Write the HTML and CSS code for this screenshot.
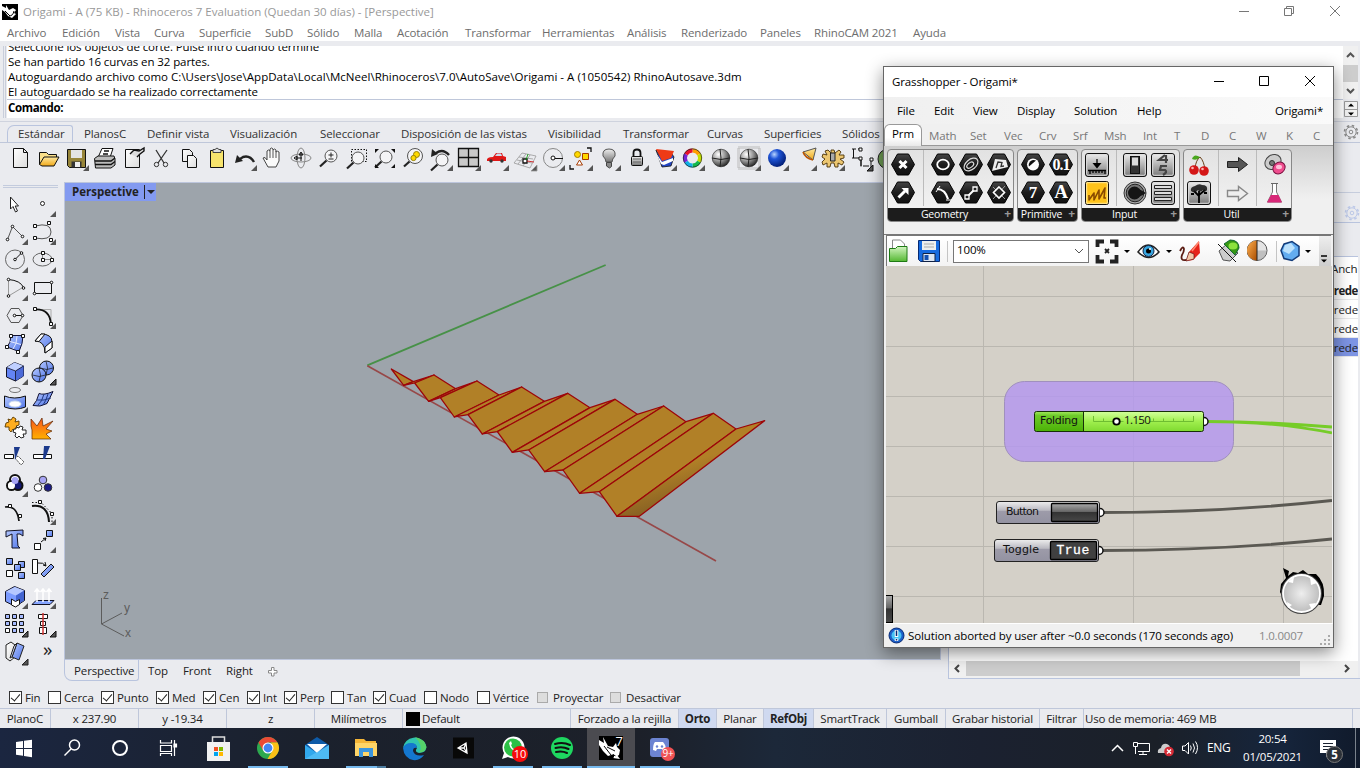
FILE: index.html
```html
<!DOCTYPE html>
<html lang="es">
<head>
<meta charset="utf-8">
<title>Origami - A (75 KB) - Rhinoceros 7 Evaluation</title>
<link rel="stylesheet" href="styles.css">
</head>
<body>
<svg class="defs" width="0" height="0">
<defs>
<linearGradient id="gBlue" x1="0" y1="0" x2="1" y2="1"><stop offset="0" stop-color="#b4c8ff"/><stop offset="1" stop-color="#4f74e8"/></linearGradient>
<linearGradient id="gPaper" x1="0" y1="0" x2="1" y2="1"><stop offset="0" stop-color="#fff"/><stop offset="1" stop-color="#dcdcdc"/></linearGradient>
<linearGradient id="gGold" x1="0" y1="0" x2="0" y2="1"><stop offset="0" stop-color="#ffe9a0"/><stop offset="1" stop-color="#f0a818"/></linearGradient>
<linearGradient id="gFire" x1="0" y1="0" x2="0" y2="1"><stop offset="0" stop-color="#f7541c"/><stop offset="1" stop-color="#ffb000"/></linearGradient>
<radialGradient id="gGrey" cx=".35" cy=".3" r=".75"><stop offset="0" stop-color="#fff"/><stop offset=".5" stop-color="#999"/><stop offset="1" stop-color="#222"/></radialGradient>
<radialGradient id="gSea" cx=".35" cy=".3" r=".75"><stop offset="0" stop-color="#b8d4ff"/><stop offset=".35" stop-color="#1f55d8"/><stop offset="1" stop-color="#001a70"/></radialGradient>
<linearGradient id="gBtn" x1="0" y1="0" x2="0" y2="1"><stop offset="0" stop-color="#eee"/><stop offset="1" stop-color="#777"/></linearGradient>
<linearGradient id="gHex" x1="0" y1="0" x2="0" y2="1"><stop offset="0" stop-color="#444"/><stop offset=".5" stop-color="#1c1c1c"/><stop offset="1" stop-color="#111"/></linearGradient>
<linearGradient id="gGreen" x1="0" y1="0" x2="0" y2="1"><stop offset="0" stop-color="#d2f5c0"/><stop offset="1" stop-color="#54b832"/></linearGradient>
<linearGradient id="gOrange" x1="0" y1="0" x2="1" y2="1"><stop offset="0" stop-color="#ffb050"/><stop offset="1" stop-color="#a84c00"/></linearGradient>
<linearGradient id="gShade" x1=".45" y1=".45" x2=".6" y2=".75"><stop offset="0" stop-color="#b18027"/><stop offset="1" stop-color="#8a6323"/></linearGradient>
<symbol id="tri" viewBox="0 0 28 28"><path d="M27 21v6h-6z" fill="#555"/></symbol>
<symbol id="hex" viewBox="0 0 28 28"><path d="M8 4h11l6 10.500-6 10.500H8L2 14.500z" fill="url(#gHex)" stroke="#000" transform="translate(.5 0)"/></symbol>
<symbol id="key" viewBox="0 0 28 28"><rect x="2.500" y="3.500" width="23" height="23" rx="2.500" fill="url(#gBtn)" stroke="#111"/><rect x="3.700" y="4.700" width="20.600" height="20.600" rx="1.500" fill="none" stroke="#ddd"/></symbol>
<symbol id="mag" viewBox="0 0 28 28"><circle cx="17" cy="12" r="6" fill="#f4f4f6" stroke="#555"/><path d="M12.500 16.500 6 22.500" stroke="#222" stroke-width="2.200"/></symbol>
<symbol id="cog" viewBox="0 0 16 16"><circle cx="8" cy="8" r="5.200" fill="none" stroke="currentColor"/><circle cx="8" cy="8" r="6.500" fill="none" stroke="currentColor" stroke-width="1.600" stroke-dasharray="2.500 2.600"/><circle cx="8" cy="8" r="1.800" fill="none" stroke="currentColor"/></symbol>
</defs>
</svg>

<div class="rhino">
  <header class="titlebar">
    <svg class="logo" width="16" height="16" viewBox="0 0 16 16"><rect width="16" height="16" fill="#000"/><path d="M0 2l4 2 0-3 3 5 4-2 3 2-2 3 2 1-4 4-4-2-3-4-3-2z" fill="#fff"/><path d="M7 12q4 0 5-5M3 7l5 5" stroke="#000" fill="none"/></svg>
    <span class="caption">Origami - A (75 KB) - Rhinoceros 7 Evaluation (Quedan 30 días) - [Perspective]</span>
    <svg class="winctl" width="110" height="22" viewBox="0 0 110 22" fill="none" stroke="#777"><path d="M7 10.500h10M98 5l10 10M108 5 98 15"/><path d="M52.500 7.500h7v7h-7zM54.500 7V5.500h7v7H60"/></svg>
  </header>
  <nav class="menu"><span>Archivo</span><span>Edición</span><span>Vista</span><span>Curva</span><span>Superficie</span><span>SubD</span><span>Sólido</span><span>Malla</span><span>Acotación</span><span>Transformar</span><span>Herramientas</span><span>Análisis</span><span>Renderizado</span><span>Paneles</span><span>RhinoCAM 2021</span><span>Ayuda</span></nav>

  <section class="command">
    <i class="grip"></i>
    <div class="cmdbox">
      <div class="history"><p>Seleccione los objetos de corte. Pulse intro cuando termine</p><p>Se han partido 16 curvas en 32 partes.</p><p class="path">Autoguardando archivo como C:\Users\Jose\AppData\Local\McNeel\Rhinoceros\7.0\AutoSave\Origami - A (1050542) RhinoAutosave.3dm</p><p>El autoguardado se ha realizado correctamente</p></div>
      <div class="prompt">Comando:</div>
    </div>
    <svg class="cmdscroll" width="17" height="72" viewBox="0 0 17 72"><path d="M0 0h15v53H0z" fill="#f0f0f0"/><path d="M0 19h15v17H0z" fill="#cdcdcd"/><path d="M4 11l3.500-3.500L11 11M4 43l3.500 3.500L11 43" fill="none" stroke="#555" stroke-width="2"/><path d="M1.500 55.500h13v15h-13zM1.500 63.500h13" fill="#f2f2f2" stroke="#999"/><path d="M8 57.500l3 3H5zM8 69.500l3-3H5z" fill="#000"/></svg>
  </section>

  <nav class="tooltabs"><span class="on">Estándar</span><span>PlanosC</span><span>Definir vista</span><span>Visualización</span><span>Seleccionar</span><span>Disposición de las vistas</span><span>Visibilidad</span><span>Transformar</span><span>Curvas</span><span>Superficies</span><span>Sólidos</span><svg width="16" height="16"><use href="#cog"/></svg></nav>

  <div class="toolbar">
    <svg viewBox="0 0 28 28"><path d="M7.500 4.500h10l4 4v15h-14z" fill="url(#gPaper)" stroke="#111"/><path d="M17.500 4.500v4h4" fill="none" stroke="#111"/></svg>
    <svg viewBox="0 0 28 28"><path d="M5.500 20.500v-12h7l2 2h8v3" fill="#fbe08a" stroke="#111"/><path d="M5.500 20.500 10 13h15l-5 9H8z" fill="url(#gGold)" stroke="#111"/></svg>
    <svg viewBox="0 0 28 28"><path d="M5.500 5.500h18v18h-16l-2-2z" fill="#97853a" stroke="#111"/><path d="M9 6h11v8H9z" fill="#e4e4e4"/><path d="M9.500 17.500h10v6h-10z" fill="#333"/><path d="M13 18h5v5h-5z" fill="#eee"/><use href="#tri"/></svg>
    <svg viewBox="0 0 28 28"><path d="M12 4.500h11l-3 9H8z" fill="#fff" stroke="#111"/><path d="M4.500 14.500 8 12h16l1 3v6l-4 3H5.500z" fill="#bbb" stroke="#111"/><path d="M5 17h16l4-3M5 20.500h16l4-3M14 7h5M13 10h5" stroke="#111" stroke-width="1.300" fill="none"/></svg>
    <svg viewBox="0 0 28 28"><path d="M7.500 5.500h14v18h-14z" fill="url(#gPaper)" stroke="#111"/><path d="M12 10l4-4 5 1 5-3v3l-4 3-3 3" fill="#ddd" stroke="#111" stroke-width="1.400"/></svg>
    <svg viewBox="0 0 28 28" fill="none" stroke="#333"><path d="M10 6l8 13M21 6l-9 13" stroke-width="1.300"/><circle cx="10.500" cy="20.500" r="2.200"/><circle cx="19.500" cy="20.500" r="2.200"/></svg>
    <svg viewBox="0 0 28 28" fill="url(#gPaper)" stroke="#111"><path d="M8.500 5.500h7l3 3v9h-10z"/><path d="M13.500 11.500h6l3 3v9h-9z"/></svg>
    <svg viewBox="0 0 28 28"><path d="M8.500 6.500h13v17h-13z" fill="#f7e46d" stroke="#111"/><path d="M11 8.500h8v-3h-2L15 4l-2 1.500h-2z" fill="#ddd" stroke="#444"/></svg>
    <svg viewBox="0 0 28 28"><path d="M24 18q-4-7-11-5l-3 2" fill="none" stroke="#222" stroke-width="2.400"/><path d="M5 19l2-8 6 6z" fill="#222"/><use href="#tri"/></svg>
    <svg viewBox="0 0 28 28"><path d="M10 23l-5-9q2-2 4 2V7q1.500-2 3 0V5q1.500-2 3 0v1q1.500-2 3 0v2q1.500-1.500 3 0v9l-3 6z" fill="#fafafa" stroke="#444"/><path d="M12 7v7M15 6v8M18 7v7" stroke="#555"/></svg>
    <svg viewBox="0 0 28 28" fill="none" stroke="#888"><ellipse cx="15" cy="14" rx="10" ry="4"/><ellipse cx="15" cy="14" rx="4" ry="10"/><path d="M10 14h6M15 9v8M8 14l3-2v4zM15 8l-2 3h4z" stroke="#111"/></svg>
    <svg viewBox="0 0 28 28"><use href="#mag"/><path d="M14.500 11h5M17 8.500v5M14.500 15h5" stroke="#222"/></svg>
    <svg viewBox="0 0 28 28"><rect x="9.500" y="5.500" width="15" height="12" fill="none" stroke="#111" stroke-dasharray="1.500 1.500"/><g transform="translate(-1 2)"><use href="#mag"/></g></svg>
    <svg viewBox="0 0 28 28"><g transform="translate(-1 1)"><use href="#mag"/></g><path d="M5 9V5h4zM21 5h4v4zM25 20v4h-4zM9 24H5v-4z" fill="#111"/></svg>
    <svg viewBox="0 0 28 28"><circle cx="17" cy="12" r="7.500" fill="#f4f4f6" stroke="#555"/><path d="M11.500 17.500 6 22.500" stroke="#222" stroke-width="2.200"/><circle cx="18.500" cy="10.500" r="3" fill="#ffd900" stroke="#98820a"/><circle cx="15.500" cy="14" r="2.600" fill="#ffd900" stroke="#98820a"/></svg>
    <svg viewBox="0 0 28 28"><g transform="translate(-1 4)"><use href="#mag"/></g><path d="M23 11q-6-7-13-2" fill="none" stroke="#222" stroke-width="2.400"/><path d="M5 13l1-8 6 5z" fill="#222"/><use href="#tri"/></svg>
    <svg viewBox="0 0 28 28"><path d="M4.500 4.500h20v18h-20z" fill="#c9c9c9" stroke="#111" stroke-width="1.300"/><path d="M4 13.500h21M14.500 4v19" stroke="#111" stroke-width="1.300"/><use href="#tri"/></svg>
    <svg viewBox="0 0 28 28"><path d="M5 17q-1-4 6-4l3-4h6l1 3 3 1v4z" fill="#e01818"/><path d="M13 12l2-2.500h4l1 2.500z" fill="#cde"/><circle cx="9" cy="17" r="1.700" fill="#333"/><circle cx="20" cy="17" r="1.700" fill="#333"/><use href="#tri"/></svg>
    <svg viewBox="0 0 28 28" fill="none" stroke="#999" stroke-width=".8"><path d="M4 19 12 9l14 3-6 12zM7 16l15 3M9 13l14 2M8 20l8-10M13 22l7-11"/><path d="M13 15h4v4h-4z" stroke="#111" stroke-width="1.300" fill="#fff"/><path d="M16 16l2-6" stroke="#090"/><path d="M17 17l7 1" stroke="#c00"/><use href="#tri"/></svg>
    <svg viewBox="0 0 28 28"><circle cx="15" cy="14" r="9.500" fill="none" stroke="#888"/><path d="M15 14.500h10" stroke="#111"/><circle cx="15" cy="14" r="2" fill="#fff" stroke="#111"/><use href="#tri"/></svg>
    <svg viewBox="0 0 28 28"><path d="M4 21v4h4M21 4h4v4" fill="none" stroke="#111" stroke-width="1.300"/><circle cx="11.500" cy="10.500" r="3" fill="#ffd900" stroke="#a68000"/><path d="M16.500 9.500h6v6h-6z" fill="#ffd900" stroke="#a63a00"/><path d="M13.500 16l3 5h-6z" fill="#fff" stroke="#a63a00"/><use href="#tri"/></svg>
    <svg viewBox="0 0 28 28"><path d="M12 18q0-3-3-6-1-7 6-7t6 7q-3 3-3 6z" fill="url(#gBtn)" stroke="#555"/><path d="M12.500 18.500h5v4l-2 1.500-3-2z" fill="#888" stroke="#444"/><use href="#tri"/></svg>
    <svg viewBox="0 0 28 28"><path d="M11.500 13V9q0-3.500 3.500-3.500t3.500 3.500v4" fill="none" stroke="#111" stroke-width="1.800"/><rect x="9.500" y="12.500" width="11" height="9" rx="1" fill="url(#gBtn)" stroke="#111"/><path d="M11 15h8M11 18h8" stroke="#666"/><use href="#tri"/></svg>
    <svg viewBox="0 0 28 28"><path d="M6 6l5 7 11-3 2 3-3 9-9 1z" fill="#2346c4" stroke="#111" stroke-width=".8"/><path d="M6 9l6 9 11-4v3l-9 4-3-1z" fill="#fff"/><path d="M6 5l18 2-3 7-9 3z" fill="#ee3a16"/><use href="#tri"/></svg>
    <svg viewBox="0 0 28 28" fill="none" stroke-width="4"><path d="M14.500 6.500a7.500 7.500 0 0 1 6.500 3.700" stroke="#ff9e00"/><path d="M21 10.200a7.500 7.500 0 0 1 0 7.600" stroke="#c5e000"/><path d="M21 17.800a7.500 7.500 0 0 1-6.500 3.700" stroke="#12b94c"/><path d="M14.500 21.500A7.500 7.500 0 0 1 8 17.800" stroke="#10b0e8"/><path d="M8 17.800a7.500 7.500 0 0 1 0-7.600" stroke="#7524d8"/><path d="M8 10.200a7.500 7.500 0 0 1 6.500-3.700" stroke="#e8102c"/><circle cx="14.500" cy="14" r="9.200" stroke="#222" stroke-width=".7"/><use href="#tri"/></svg>
    <svg viewBox="0 0 28 28"><circle cx="15" cy="14" r="8.800" fill="url(#gGrey)" stroke="#222" stroke-width=".6"/><path d="M6 14q9 3 18 0M14 5q2 9 0 18" stroke="#222" fill="none"/></svg>
    <svg viewBox="0 0 28 28"><rect x="4.500" y="3.500" width="21" height="21" fill="none" stroke="#bbb" stroke-width="3" stroke-dasharray="1 1"/><circle cx="15" cy="14" r="8.800" fill="url(#gGrey)" stroke="#222" stroke-width=".6"/><path d="M6 14q9 3 18 0M14 5q2 9 0 18" stroke="#222" fill="none"/><use href="#tri"/></svg>
    <svg viewBox="0 0 28 28"><circle cx="15" cy="14" r="9" fill="url(#gSea)"/><use href="#tri"/></svg>
    <svg viewBox="0 0 28 28"><path d="M13 8l13-4-3 12z" fill="url(#gGold)" stroke="#555"/><path d="M13 8q2 6 10 8" fill="none" stroke="#b50" stroke-width="1.600"/><use href="#tri"/></svg>
    <svg viewBox="0 0 28 28"><path d="M13 9l0-3 3 0 1 3 4-3 2 2-2 3 5 0 0 3-4 1 4 3-2 3-4-2 0 4-3 0-1-4-3 0-1 4-3 0 0-4-4 2-1-3 3-3-3-2 1-3 4 1-2-4 3-1 3 3z" fill="#ecc670" stroke="#4b3208" stroke-width=".9"/><path d="M12.500 9h4.500v8h-4.500z" fill="#aaa" stroke="#222"/><use href="#tri"/></svg>
    <svg viewBox="0 0 28 28" fill="none" stroke="#111"><path d="M6 5h4M6 14h4M7.500 5v9M12 5h4M10 14h5v8M15 14.500v8M25 15v8M17 22h6" /><path d="M13 4h3v3h-3zM13 13h3v3h-3zM24 14h3v3h-3z" fill="#fff"/><use href="#tri"/></svg>
    <svg viewBox="0 0 28 28"><circle cx="14" cy="15" r="10" fill="#6d9b54" stroke="#222"/></svg>
  </div>

  <main class="work">
    <aside class="side">
      <i class="hgrip"></i>
      <div class="tools">
        <svg viewBox="0 0 28 28"><path d="M9.500 7v12l2.500-2.500L14.500 22l2-1-2.300-5H17.500z" fill="#fff" stroke="#222"/></svg>
        <svg viewBox="0 0 28 28"><circle cx="13.500" cy="13.500" r="2" fill="#fff" stroke="#222"/><use href="#tri"/></svg>
        <svg viewBox="0 0 28 28"><path d="M6.500 21.500l5-13 10 10" fill="none" stroke="#555"/><g fill="#fff" stroke="#111"><circle cx="6.500" cy="21.500" r="1.300"/><circle cx="11.500" cy="8.500" r="1.300"/><circle cx="21.500" cy="18.500" r="1.300"/></g><use href="#tri"/></svg>
        <svg viewBox="0 0 28 28"><path d="M6 8q16-4 16 6 0 9-16 6" fill="none" stroke="#555"/><g fill="#fff" stroke="#111"><path d="M4.500 6.500h3v3h-3zM4.500 18.500h3v3h-3zM18.500 3.500h3v3h-3zM20.500 20.500h3v3h-3z"/></g><use href="#tri"/></svg>
        <svg viewBox="0 0 28 28"><circle cx="14" cy="13.500" r="9.500" fill="none" stroke="#666"/><path d="M14 13.500 20.500 7" stroke="#111"/><circle cx="14" cy="13.500" r="1.300" fill="#fff" stroke="#111"/><circle cx="20.500" cy="7" r="1.300" fill="#fff" stroke="#111"/><use href="#tri"/></svg>
        <svg viewBox="0 0 28 28"><ellipse cx="13.500" cy="13.500" rx="9.500" ry="6.500" fill="none" stroke="#666"/><path d="M13.500 7v6.500H23" fill="none" stroke="#888"/><g fill="#fff" stroke="#111"><path d="M12.500 5.500h3v3h-3zM12.500 12.500h3v3h-3zM21.500 12.500h3v3h-3z"/></g><use href="#tri"/></svg>
        <svg viewBox="0 0 28 28"><path d="M7.500 22V5.500M7.500 22l15-9" stroke="#999"/><path d="M7.500 5.500q12 1 15 8" fill="none" stroke="#111"/><g fill="#fff" stroke="#111"><circle cx="7.500" cy="5.500" r="1.300"/><circle cx="7.500" cy="22" r="1.300"/><circle cx="22.500" cy="14" r="1.300"/></g><use href="#tri"/></svg>
        <svg viewBox="0 0 28 28"><path d="M5.500 8.500h17v11h-17z" fill="none" stroke="#111"/><circle cx="22.500" cy="8.500" r="1.300" fill="#fff" stroke="#111"/><circle cx="5.500" cy="19.500" r="1.300" fill="#fff" stroke="#111"/><use href="#tri"/></svg>
        <svg viewBox="0 0 28 28"><path d="M10 6.500h8l4 7-4 7h-8l-4-7z" fill="none" stroke="#555"/><path d="M14 13.500h8" stroke="#111"/><circle cx="13.500" cy="13.500" r="1.300" fill="#fff" stroke="#111"/><circle cx="21.500" cy="13.500" r="1.300" fill="#fff" stroke="#111"/><use href="#tri"/></svg>
        <svg viewBox="0 0 28 28"><path d="M6 7.500h16v15" fill="none" stroke="#aaa"/><path d="M6 7.500q15-1 16 15" fill="none" stroke="#111" stroke-width="1.800"/><path d="M4.500 5.500h3v3h-3zM20.500 20.500h3v3h-3z" fill="#fff" stroke="#111"/><use href="#tri"/></svg>
        <svg viewBox="0 0 28 28"><path d="M10 5.500l12 0q0 8-4 16L6 17q4-4 4-11.500z" fill="url(#gBlue)" stroke="#113"/><path d="M16 6q0 8-4 13M9 11.500l11 3" fill="none" stroke="#e4eaff"/><path d="M8.500 4.500h3v3h-3zM20.500 4.500h3v3h-3zM4.500 15.500h3v3h-3zM15.500 20.500h3v3h-3z" fill="#fff" stroke="#111"/><use href="#tri"/></svg>
        <svg viewBox="0 0 28 28"><path d="M6 11l6-7q11 0 11 8v6l-7 5q0-12-10-12z" fill="url(#gBlue)" stroke="#111"/><path d="M6 11l6-7h4l-6 7.500zM16 17l7-6v7l-7 5z" fill="#fff" stroke="#111"/><use href="#tri"/></svg>
        <svg viewBox="0 0 28 28"><path d="M5.500 9.500l8-5 9 3.500v10l-8 5-9-4z" fill="#6484f4" stroke="#112"/><path d="M5.500 9.500l8-5 9 3.500-8 5z" fill="#c0d0ff"/><path d="M14.500 13v10l8-5V8z" fill="#4c6ad8"/><path d="M5.500 9.500l9 3.500 8-5M14.500 13v10" fill="none" stroke="#112" stroke-width=".8"/><use href="#tri"/></svg>
        <svg viewBox="0 0 28 28" stroke="#111"><circle cx="17.500" cy="10" r="7" fill="url(#gBlue)"/><path d="M11 10q7 3 13 0M17 3q3 7 0 14" fill="none" stroke-width=".7"/><circle cx="10" cy="17" r="7" fill="url(#gBlue)"/><path d="M3.500 17q7 3 13 0M10 10q3 7 0 14" fill="none" stroke-width=".7"/><use href="#tri"/></svg>
        <svg viewBox="0 0 28 28"><ellipse cx="14" cy="4" rx="5.500" ry="2.500" fill="none" stroke="#777"/><path d="M3.500 10q10 4 21 0v11q-10 4-21 0z" fill="url(#gBlue)" stroke="#111"/><ellipse cx="14" cy="18" rx="6" ry="3" fill="#fff" stroke="#cde"/><use href="#tri"/></svg>
        <svg viewBox="0 0 28 28"><path d="M10 4.500q5 2 14-2-3 6-6 12-7 4-14 2 4-4 6-12z" fill="url(#gBlue)" stroke="#113" transform="translate(0 3)"/><path d="M15 8q-2 8-6 11M19 8q-2 7-5 11M8 14q7 1 14-2" fill="none" stroke="#203880"/><use href="#tri"/></svg>
        <svg viewBox="0 0 28 28"><path d="M7 5l3 1 2-3 3 2-1 3 4-1 0 4-3 1 3 3-3 2-3-2-2 3-2-2 0-3-4 0 1-4 3-1z" fill="#ffae20" stroke="#5a3a00" stroke-width=".9"/><path d="M15 13l3 1 1-2 3 1-1 3 4 0 0 4-3 0 1 3-3 1-2-2-2 2-2-2 1-3-3-1 1-3 2 0z" fill="#fff" stroke="#111" stroke-width=".9"/></svg>
        <svg viewBox="0 0 28 28"><path d="M2 5l6 7 5-8 1 8 10-5-7 8 6 2-6 3 5 5H3V16l-1-4z" fill="url(#gFire)" stroke="#5a2500" stroke-width=".7"/></svg>
        <svg viewBox="0 0 28 28"><path d="M3.500 12.500h9v4h-9z" fill="#fff" stroke="#111"/><path d="M14 16l3-2 6 6-3 3z" fill="#fff" stroke="#444" stroke-dasharray="1.500 .7"/><path d="M13 5h6l-5 13z" fill="#1c3a8c"/></svg>
        <svg viewBox="0 0 28 28"><path d="M4.500 12.500h18v4h-18z" fill="#fff" stroke="#111"/><path d="M15 4h6l-5 13h-2z" fill="#1c3a8c"/></svg>
        <svg viewBox="0 0 28 28"><circle cx="14" cy="10" r="5" fill="#fff" stroke="#111" stroke-width="2"/><circle cx="10.500" cy="15.500" r="4.500" fill="#fff" stroke="#111" stroke-width="2"/><circle cx="17" cy="15.500" r="4.500" fill="#141873" stroke="#111" stroke-width="2"/><circle cx="10.500" cy="15.500" r="3.500" fill="#fff"/><circle cx="14" cy="10.500" r="3.500" fill="#a7a4f4"/><use href="#tri"/></svg>
        <svg viewBox="0 0 28 28" stroke="#333"><circle cx="14" cy="10" r="3.800" fill="#a7a4f4"/><circle cx="9" cy="17.500" r="3.800" fill="#fff"/><circle cx="19" cy="17.500" r="3.800" fill="#1b1a85"/></svg>
        <svg viewBox="0 0 28 28"><path d="M4 9q12-2 14 14" fill="none" stroke="#111" stroke-width="1.700"/><path d="M7.500 6.500h3v3h-3zM17.500 16.500h3v3h-3z" fill="#fff" stroke="#111"/></svg>
        <svg viewBox="0 0 28 28"><path d="M3 8q16-2 17 16" fill="none" stroke="#111" stroke-width="2"/><path d="M3 4.500h9l11 11v9" fill="none" stroke="#111" stroke-dasharray="1.500 2"/><path d="M9.500 2.500h3v3h-3zM21.500 14.500h3v3h-3z" fill="#fff" stroke="#111"/><use href="#tri"/></svg>
        <svg viewBox="0 0 28 28"><path d="M5 5l17-1v6l-3-2h-3l1 12 2 2h-8V8l-6 3z" fill="url(#gBlue)" stroke="#112"/></svg>
        <svg viewBox="0 0 28 28"><path d="M5.500 17.500h6v6h-6z" fill="#fff" stroke="#111"/><path d="M17.500 4.500h6v6h-6z" fill="url(#gBlue)" stroke="#111"/><path d="M12 16l5-4M17 12l-3 .500M17 12l-1 3" stroke="#111"/><use href="#tri"/></svg>
        <svg viewBox="0 0 28 28" stroke="#111" fill="url(#gBlue)"><path d="M5.500 4.500h6v6h-6z"/><path d="M17.500 7.500h6v6h-6z"/><path d="M13.500 10.500h6v6h-6z"/><path d="M5.500 16.500h6v6h-6z" fill="#fff"/><path d="M17.500 18.500h6v6h-6z"/></svg>
        <svg viewBox="0 0 28 28"><path d="M3.500 5.500h5v14h-5z" fill="#fff" stroke="#111"/><path d="M12 20l10-10 3 3-10 10z" fill="url(#gBlue)" stroke="#111"/><path d="M9 9q5-1 8 3M17 12l-1-4M17 12l-3-1" fill="none" stroke="#111"/></svg>
        <svg viewBox="0 0 28 28"><path d="M4.500 9.500l9-5 10 4v10l-9 6-10-5z" fill="#7b9bff" stroke="#112"/><path d="M15 13.500v10l8-5V8.500z" fill="#4364d0"/><path d="M5 9.500l9-4.500 9 3.500-8.500 5z" fill="#b5c8ff"/><path d="M10.500 17l4 2.500 4-2v5l-4 2.500-4-2z" fill="#fff" stroke="#111"/><use href="#tri"/></svg>
        <svg viewBox="0 0 28 28"><path d="M7 18.500h18l-4 4H3z" fill="#86a5ff" stroke="#112"/><path d="M8 20V7M14 20V7M20 20V7M5.500 10 8 7l2.500 3M11.500 10 14 7l2.500 3M17.500 10 20 7l2.500 3" fill="none" stroke="#fff" stroke-width="1.500"/><use href="#tri"/></svg>
        <svg viewBox="0 0 28 28" stroke="#111" fill="#a7bbff"><path d="M4.500 4.500h4v4h-4zM11.500 4.500h4v4h-4zM18.500 4.500h4v4h-4zM4.500 11.500h4v4h-4zM11.500 11.500h4v4h-4zM18.500 11.500h4v4h-4zM11.500 18.500h4v4h-4zM18.500 18.500h4v4h-4z"/><path d="M4.500 18.500h4v4h-4z" fill="#fff"/><use href="#tri"/></svg>
        <svg viewBox="0 0 28 28" fill="none" stroke="#111"><path d="M9.500 4.500h9v4h-9zM11.500 11.500h5v4h-5zM10.500 17.500h7v6h-7z" fill="#fff"/><path d="M14 3v22" stroke="#c33" stroke-width="1.500"/><use href="#tri"/></svg>
        <svg viewBox="0 0 28 28" stroke="#222"><path d="M5 7l5-3 4 3v12l-5 4-4-3z" fill="url(#gPaper)"/><path d="M16 5l7 3-5 14-7-3z" fill="url(#gBlue)"/><path d="M16 5l-3 3-4 12 2-1z" fill="#dfe6ff"/><use href="#tri"/></svg>
        <span class="more">»</span>
      </div>
    </aside>
    <section class="view">
      <div class="viewlabel"><b>Perspective</b><i></i></div>
      <svg class="scene" viewBox="65 183 875 476" width="875" height="476">
        <g transform="translate(350 250) scale(.33333)">
          <path d="M52 346 767 45" stroke="#479147" stroke-width="5.500"/>
          <path d="M52 347 1098 933" stroke="#974848" stroke-width="5"/>
          <g stroke="#9d0509" stroke-width="3.800" stroke-linejoin="round" fill="#b18027">
            <path d="M124 357 161 406 190 395z"/><path d="M161 406 194 399 252 375 190 395z"/>
            <path d="M194 399 236 454 317 416 252 375z"/><path d="M236 454 271 443 381 393 317 416z"/>
            <path d="M271 443 313 501 447 435 381 393z"/><path d="M313 501 354 494 515 411 447 435z"/>
            <path d="M354 494 397 552 583 454 515 411z"/><path d="M397 552 442 545 653 430 583 454z"/>
            <path d="M442 545 487 607 720 473 653 430z"/><path d="M487 607 536 600 795 448 720 473z"/>
            <path d="M536 600 584 665 862 493 795 448z"/><path d="M584 665 639 660 941 468 862 493z"/>
            <path d="M639 660 689 730 1008 515 941 468z"/><path d="M689 730 748 725 1090 490 1008 515z"/>
            <path d="M748 725 801 799 1158 537 1090 490z"/><path d="M801 799 868 799 1244 512 1158 537z" fill="url(#gShade)"/>
          </g>
        </g>
        <path d="M101.500 598v26l20.500-11M101.500 624l22.500 12" fill="none" stroke="#5c5c5c"/>
        <text x="103" y="599" class="axis">z</text><text x="124" y="612" class="axis">y</text><text x="125" y="637" class="axis">x</text>
      </svg>
    </section>
    <aside class="panel">
      <div class="ptop"></div>
      <div class="pgear"><svg width="16" height="16"><use href="#cog"/></svg></div>
      <div class="pbody">
        <div class="pblank"></div>
        <div class="rows"><p>Anch</p><p class="b">Prede</p><p>Prede</p><p>Prede</p><p class="sel">Prede</p></div>
        <div class="hscroll"><svg width="17" height="16" viewBox="0 0 17 16"><path d="M10 4 6.500 7.500 10 11" fill="none" stroke="#444" stroke-width="2"/></svg><i></i><svg width="17" height="16" viewBox="0 0 17 16"><path d="M7 4l3.500 3.500L7 11" fill="none" stroke="#444" stroke-width="2"/></svg></div>
      </div>
    </aside>
  </main>

  <nav class="viewtabs"><span class="on">Perspective</span><span>Top</span><span>Front</span><span>Right</span><svg width="10" height="10" viewBox="0 0 10 10"><path d="M3.500.500h2.500v3h3v2.500H6v3H3.500V6h-3V3.500h3z" fill="#fff" stroke="#888"/></svg></nav>

  <div class="osnap">
    <label class="c"><i></i>Fin</label><label><i></i>Cerca</label><label class="c"><i></i>Punto</label><label class="c"><i></i>Med</label><label class="c"><i></i>Cen</label><label class="c"><i></i>Int</label><label class="c"><i></i>Perp</label><label><i></i>Tan</label><label class="c"><i></i>Cuad</label><label><i></i>Nodo</label><label><i></i>Vértice</label><label class="d"><i></i>Proyectar</label><label class="d"><i></i>Desactivar</label>
  </div>

  <div class="status"><span>PlanoC</span><span>x 237.90</span><span>y -19.34</span><span>z</span><span>Milímetros</span><span class="l"><i></i>Default</span><span>Forzado a la rejilla</span><span class="on">Orto</span><span>Planar</span><span class="on">RefObj</span><span>SmartTrack</span><span>Gumball</span><span>Grabar historial</span><span>Filtrar</span><span class="l">Uso de memoria: 469 MB</span><span></span></div>
</div>

<footer class="taskbar">
  <div class="sys">
    <svg viewBox="0 0 48 40"><path d="M16 14l7-1v7h-7zM24 12.800l8-1V20h-8zM16 21h7v6.800l-7-1zM24 21h8v8.200l-8-1.200z" fill="#fff"/></svg>
    <svg viewBox="0 0 48 40" fill="none" stroke="#fff" stroke-width="1.500"><circle cx="26.500" cy="17" r="5"/><path d="M23 21l-6.500 6.500"/></svg>
    <svg viewBox="0 0 48 40"><circle cx="24" cy="20" r="7" fill="none" stroke="#fff" stroke-width="2"/></svg>
    <svg viewBox="0 0 48 40" fill="none" stroke="#fff" stroke-width="1.200"><path d="M16.500 12v3h11v-3M16.500 17.500h11v6h-11zM16.500 28v-2.500h11V28M30.500 12v16"/><path d="M30 16h2.500v3H30z" fill="#fff"/></svg>
  </div>
  <div class="apps">
    <span><svg viewBox="0 0 48 40"><path d="M13 14h23v19H13z" fill="#f1f1f1"/><path d="M18.500 14V9h12v5" fill="none" stroke="#ddd" stroke-width="1.500"/><path d="M20 19h4v4h-4z" fill="#f25022"/><path d="M25 19h4v4h-4z" fill="#7fba00"/><path d="M20 24h4v4h-4z" fill="#00a4ef"/><path d="M25 24h4v4h-4z" fill="#ffb900"/></svg></span>
    <span class="run"><svg viewBox="0 0 48 40"><circle cx="25" cy="20" r="11" fill="#2da94f"/><path d="M15.500 14.500A11 11 0 0 1 34.500 14.500H25l-5 8z" fill="#ea4a35"/><path d="M34.500 14.500A11 11 0 0 1 24.500 31l5-8.500q1-4-1.500-8z" fill="#fbc116"/><circle cx="25" cy="20" r="5.500" fill="#fff"/><circle cx="25" cy="20" r="4.400" fill="#4285f4"/></svg></span>
    <span><svg viewBox="0 0 48 40"><path d="M13 17l12-8 12 8v14H13z" fill="#0e5ba8"/><path d="M13 17l12 8 12-8v14H13z" fill="#31a8ec"/><path d="M15 16h20l-10 9z" fill="#fff"/><path d="M13 31l24-14v14z" fill="#62c8fa" opacity=".6"/></svg></span>
    <span class="run two"><svg viewBox="0 0 48 40"><path d="M14 11h9l2 2h10v15H14z" fill="#f5b637"/><path d="M14 15h22v13H14z" fill="#ffd567"/><path d="M18 20h14v9h-4v-5h-6v5h-4z" fill="#3b95dd"/></svg></span>
    <span><svg viewBox="0 0 48 40"><path d="M13 20A12 12 0 0 1 36 17q2 7-7 8-5-1-2-5-1-5-7-4-5 1-7 4z" fill="#31c4b0"/><path d="M13 20q2-5 8-5 6 0 6 5-4-1-4 3 2 6 11 4-4 6-11 5-9-2-10-12z" fill="#1477cf"/><path d="M25 9q10 2 11.500 10-1 5-7 5.500 4-7-4.500-15.500z" fill="#55d369"/></svg></span>
    <span><svg viewBox="0 0 48 40"><path d="M14 9.500h21v21H14z" fill="#080808"/><path d="M19 20l8-5 1 10zM19 20h6M27 15l-2 5 3 5" fill="none" stroke="#fff" stroke-width="1.300"/></svg></span>
    <span class="run"><svg viewBox="0 0 48 40"><path d="M14 31l2-6a11 11 0 1 1 4 4z" fill="#fff"/><circle cx="25" cy="19.500" r="9" fill="#2dc146"/><path d="M21 15q1 8 9 9l1-3-3-1-2 1q-2-1-3-4l1-1-1-3z" fill="#fff"/></svg><em>10</em></span>
    <span class="run"><svg viewBox="0 0 48 40"><circle cx="25" cy="20" r="11" fill="#1ed760"/><path d="M18 16q8-2.500 15 1M18.500 20q7-2 13 1M19 24q6-1.500 11 1" fill="none" stroke="#111" stroke-width="2" stroke-linecap="round"/></svg></span>
    <span class="run active"><svg viewBox="0 0 48 40"><path d="M12 8h24v24H12z" fill="#000"/><path d="M12 12l5 3-1-6 5 9 5 1 3-4 1 4 3 3-1 5-5 3 0-4-6 2-5-5-4-6z" fill="#fff"/><path d="M17 18l7 9M20 19l8 4M27 27l5 4" stroke="#000"/><path d="M26 30l4-3 3 4z" fill="#fff"/><text x="28.500" y="18" class="seven">7</text></svg></span>
    <span class="run"><svg viewBox="0 0 48 40"><rect x="15" y="10" width="19" height="19" rx="3" fill="#6c84d2"/><path d="M18 22q0-6 2-8h8q3 3 3 8l-3 1-1-2h-5l-1 2z" fill="#fff"/><circle cx="22" cy="18.500" r="1.200" fill="#6c84d2"/><circle cx="27" cy="18.500" r="1.200" fill="#6c84d2"/></svg><em class="soft">9+</em></span>
  </div>
  <div class="tray">
    <svg width="24" viewBox="0 0 24 40"><path d="M6 23l5.500-5.500L17 23" fill="none" stroke="#fff" stroke-width="1.500"/></svg>
    <svg width="24" viewBox="0 0 24 40" fill="none" stroke="#fff"><path d="M8 15.500h11.500v8H8M13 24v2.500M9 26.500h8M3.500 14.500h4v4h-4zM5.500 18.500V26"/></svg>
    <svg width="24" viewBox="0 0 24 40"><path d="M4 25q-1-4 3-5 1-5 6-4 3 1 3 4 4 1 3 5z" fill="#ccc"/><circle cx="15" cy="23.500" r="4.800" fill="#d62a35"/><path d="M13 21.500l4 4M17 21.500l-4 4" stroke="#fff" stroke-width="1.400"/></svg>
    <svg width="24" viewBox="0 0 24 40" fill="none" stroke="#fff"><path d="M4.500 18v4.500h2.500l3.500 3.500V14.500L7 18zM12.500 17.500q1.500 2.500 0 5M15 15.500q3 4.500 0 9M17.500 13.500q4 6 0 12.500"/></svg>
    <span class="eng">ENG</span>
    <span class="clock">20:54<br>01/05/2021</span>
    <span class="note"><svg width="24" height="40" viewBox="0 0 24 40"><path d="M4 12h16v13h-6l-4 4v-4H4z" fill="#fff"/><path d="M7 15.500h10M7 18.500h10M7 21.500h7" stroke="#1a2230"/></svg><em>5</em></span>
    <i class="peek"></i>
  </div>
</footer>

<section class="gh">
  <header class="ghtitle"><span>Grasshopper - Origami*</span><svg width="120" height="30" viewBox="0 0 120 30" fill="none" stroke="#000"><path d="M9 14.500h10M54.500 9.500h9v9h-9zM100 9l10 10M110 9l-10 10"/></svg></header>
  <nav class="ghmenu"><span>File</span><span>Edit</span><span>View</span><span>Display</span><span>Solution</span><span>Help</span><span>Origami*</span></nav>
  <nav class="ghtabs"><span class="on">Prm</span><span>Math</span><span>Set</span><span>Vec</span><span>Crv</span><span>Srf</span><span>Msh</span><span>Int</span><span>T</span><span>D</span><span>C</span><span>W</span><span>K</span><span>C</span></nav>
  <div class="ribbon">
    <div class="group geo">
      <div class="keys">
        <svg viewBox="0 0 28 28"><use href="#hex"/><path d="M10.500 11l7 7M17.500 11l-7 7" stroke="#fff" stroke-width="3"/></svg><i></i>
        <svg viewBox="0 0 28 28"><use href="#hex"/><ellipse cx="14" cy="14.500" rx="5.800" ry="4.800" fill="none" stroke="#fff" stroke-width="1.800"/></svg>
        <svg viewBox="0 0 28 28"><use href="#hex"/><g fill="none" stroke="#ddd" stroke-width="1.200" transform="rotate(-40 14 14.500)"><ellipse cx="14" cy="14.500" rx="8" ry="5"/><ellipse cx="13" cy="14.500" rx="4" ry="2.300"/></g></svg>
        <svg viewBox="0 0 28 28"><use href="#hex"/><path d="M10 9l11 1 2 7-16 4z" fill="#eee"/><path d="M11 18l2-6 4 .500-1 4 3-.500" stroke="#333" stroke-width="1.300" fill="none"/></svg>
        <svg viewBox="0 0 28 28"><use href="#hex"/><path d="M9.500 19.500 16 13" stroke="#fff" stroke-width="3"/><path d="M12.500 10h7v7z" fill="#fff"/></svg><i></i>
        <svg viewBox="0 0 28 28"><use href="#hex"/><path d="M8 11q8 0 11 10" fill="none" stroke="#fff" stroke-width="2.200"/><path d="M7 14l4-6M17 22h5" stroke="#fff"/></svg>
        <svg viewBox="0 0 28 28"><use href="#hex"/><path d="M10 19l8-8" stroke="#fff" stroke-width="2"/><path d="M8 17h4v4H8zM16 9h4v4h-4z" fill="#222" stroke="#fff" stroke-width="1.300"/></svg>
        <svg viewBox="0 0 28 28"><use href="#hex"/><path d="M8 9l12 12M20 8 8 21" fill="none" stroke="#999"/><path d="M14 9l5.500 5.500L14 20l-5.500-5.500z" fill="#222" stroke="#fff" stroke-width="1.600"/></svg>
      </div><div class="cap">Geometry<b>+</b></div>
    </div>
    <div class="group pri">
      <div class="keys">
        <svg viewBox="0 0 28 28"><use href="#hex"/><circle cx="14" cy="14.500" r="6" fill="#fff"/><path d="M10 16.500 17 10.500a5 5 0 0 0-7 6" fill="#111"/></svg>
        <svg viewBox="0 0 28 28"><use href="#hex"/><text x="14" y="20" class="glyph cond">0.1</text></svg>
        <svg viewBox="0 0 28 28"><use href="#hex"/><text x="14" y="20" class="glyph">7</text></svg>
        <svg viewBox="0 0 28 28"><use href="#hex"/><text x="14" y="20" class="glyph big">A</text></svg>
      </div><div class="cap">Primitive<b>+</b></div>
    </div>
    <div class="group inp">
      <div class="keys">
        <svg viewBox="0 0 28 28"><use href="#key"/><path d="M14 9v6M5 20.500h18M7 20v4M10 20v3M13 20v3M16 20v3M19 20v3M22 20v4" stroke="#000" stroke-width="1.300"/><path d="M9.500 13h9L14 18.500z"/></svg><i></i>
        <svg viewBox="0 0 28 28"><use href="#key"/><rect x="9.500" y="6.500" width="9" height="17" fill="#333" stroke="#111"/><path d="M11 7.500h6v8h-6z" fill="#ddd"/></svg>
        <svg viewBox="0 0 28 28"><use href="#key"/><path d="M16 5 10 10h9M17 5v8M18 16h-6l-1 4h5q3 2-2 5" fill="none" stroke="#444" stroke-width="2.200"/></svg>
        <svg viewBox="0 0 28 28"><rect x="2.500" y="3.500" width="23" height="23" rx="2" fill="#ffc31b" stroke="#111"/><path d="M3.700 4.700h20.600v20.600H3.700z" fill="none" stroke="#ffeaa0"/><path d="M6 17v5l5-7v7l5-10v9l6-11-1 10h2" fill="none" stroke="#8a4b00" stroke-width="1.600" stroke-linejoin="round"/></svg><i></i>
        <svg viewBox="0 0 28 28"><circle cx="14" cy="15" r="11" fill="#aaa" stroke="#333"/><circle cx="14" cy="15" r="8.800" fill="#777" stroke="#222"/><circle cx="13.500" cy="15" r="6.500" fill="#151515"/><path d="M18 11l7 4-7 4z" fill="#151515"/></svg>
        <svg viewBox="0 0 28 28"><use href="#key"/><path d="M5.500 7.500h17v3h-17zM5.500 13.500h17v3h-17zM5.500 19.500h17v3h-17z" fill="#ddd" stroke="#222"/></svg>
      </div><div class="cap">Input<b>+</b></div>
    </div>
    <div class="group uti">
      <div class="keys">
        <svg viewBox="0 0 28 28"><path d="M10 18q1-8 5-11M20 20q-1-9-5-13" fill="none" stroke="#6a4018"/><path d="M15 7Q9 3 7 9q5 2 8-2z" fill="#4aa81f"/><circle cx="9" cy="20" r="4.800" fill="#d41616"/><circle cx="19" cy="21" r="4.800" fill="#d41616"/><circle cx="7.500" cy="18" r="1.300" fill="#ffb4b4"/><circle cx="17.500" cy="19" r="1.300" fill="#ffb4b4"/></svg><i></i>
        <svg viewBox="0 0 28 28"><path d="M4.500 11.500h11v-4l9 7-9 7v-4h-11z" fill="#555" stroke="#222"/></svg><i></i>
        <svg viewBox="0 0 28 28"><ellipse cx="12" cy="12" rx="8.500" ry="7" fill="#ccc" stroke="#444" transform="rotate(-35 12 12)"/><circle cx="11" cy="13" r="2.500" fill="#777" stroke="#333"/><ellipse cx="18" cy="18" rx="6.500" ry="5.500" fill="#ef4d8e" stroke="#7a1140" transform="rotate(-40 18 18)"/><ellipse cx="18" cy="17" rx="3" ry="2.200" fill="#ffc0d8"/></svg>
        <svg viewBox="0 0 28 28"><use href="#key"/><path d="M14 25V13M14 18l-5-5M14 17l6-5M9 16H6M19 15h3" stroke="#000" stroke-width="1.800"/><path d="M6 13q-1-4 4-5 4-3 7-1 6 0 5 5-2 3-4 0-3 3-5 0-3 4-7 1z" fill="#111" fill-opacity=".85"/></svg><i></i>
        <svg viewBox="0 0 28 28"><path d="M4.500 12.500h11v-4l9 7-9 7v-4h-11z" fill="#eee" stroke="#888" stroke-width="1.400"/></svg><i></i>
        <svg viewBox="0 0 28 28"><path d="M11.500 5.500h4V14l5 10h-14l5-10z" fill="#fff" stroke="#777"/><path d="M10 17h7.500l3.500 7.500h-15z" fill="#d82878"/><path d="M10 5.500h7" stroke="#666"/></svg>
      </div><div class="cap">Util<b>+</b></div>
    </div>
  </div>
  <div class="ghbar">
    <svg width="22" viewBox="0 0 22 31"><path d="M4.500 15V4h8l4 4v7" fill="#fff" stroke="#888"/><path d="M1.500 25.500v-13h6l2-2h9.500v15z" fill="url(#gGreen)" stroke="#1e7a14"/></svg>
    <svg class="m8" width="22" viewBox="0 0 22 31"><path d="M.500 4.500h21v21h-19l-2-2z" fill="#176be0" stroke="#062a73"/><path d="M4 5h14v9H4z" fill="#eee"/><path d="M6 8h10M6 11h10" stroke="#aaa"/><path d="M5 17.500h12v8H5z" fill="#dce6f4" stroke="#124"/><path d="M6.500 19h4v5h-4z" fill="#1550b0"/></svg>
    <i class="sep"></i>
    <div class="combo"><span>100%</span><svg width="10" height="6" viewBox="0 0 10 6"><path d="M1 1l4 4 4-4" fill="none" stroke="#555"/></svg></div>
    <svg class="m6" width="24" viewBox="0 0 24 31"><path d="M2.500 11V5.500H9M15 5.500h6.500V11M21.500 19v6.500H15M9 25.500H2.500V19" fill="none" stroke="#222" stroke-width="3.800"/><path d="M10 13l4 4M14 13l-4 4" stroke="#222" stroke-width="1.800"/></svg>
    <i class="dd m5"></i>
    <svg class="m7" width="24" viewBox="0 0 24 31"><path d="M1 16q10-14 21 0-10 11-21 0z" fill="#fff" stroke="#222" stroke-width="1.500"/><circle cx="11.500" cy="15" r="5.500" fill="#38a6e0" stroke="#124"/><circle cx="11.500" cy="15" r="2.500"/><circle cx="13" cy="13" r="1" fill="#fff"/></svg>
    <i class="dd m5"></i>
    <svg class="m7" width="24" viewBox="0 0 24 31"><path d="M1 15q3-6 4-2 0 3-2 6-2 6 4 5" fill="none" stroke="#5b1d14" stroke-width="1.800"/><path d="M7 25l3-9 10-11 1 12-7 7z" fill="#e62319"/><path d="M7 25l3-9 5 2 0 5z" fill="#f3c8a8" stroke="#611" stroke-width=".7"/><path d="M13 15l7-9" stroke="#ff8a70" stroke-width="1.500"/></svg>
    <svg class="m14" width="24" viewBox="0 0 24 31"><path d="M2 15l8-7 11 9-8 8-7-1z" fill="#ccc" stroke="#555"/><path d="M7 8l6-4q9 0 9 8l-4 7z" fill="#359713" stroke="#163"/><ellipse cx="16" cy="10" rx="4.500" ry="3.500" fill="#8be23e"/><path d="M1 8l18 18" stroke="#111"/></svg>
    <svg class="m6" width="22" viewBox="0 0 22 31"><circle cx="10" cy="14.500" r="10" fill="#e4e4e4" stroke="#555"/><path d="M10 4.500a10 10 0 0 0 0 20z" fill="url(#gOrange)"/><path d="M10 14.500v10q9-1 10-10z" fill="#999" opacity=".5"/><path d="M10 4.500v20" stroke="#222"/></svg>
    <i class="sep"></i>
    <svg class="gem" width="22" viewBox="0 0 22 31"><path d="M4 8l8-2.500 7 5v9l-7 5-8-2-3-8z" fill="#63acf0" stroke="#123a78" stroke-width="1.500"/><path d="M5 9l6-2 4 5-6 6-6-3z" fill="#d2efff" opacity=".8"/></svg>
    <i class="dd m3"></i>
    <svg class="over" width="12" viewBox="0 0 12 31"><path d="M2 20h6" stroke="#000" stroke-width="1.500"/><path d="M2 23.500h6l-3 3z"/></svg>
  </div>
  <svg class="canvas" width="446" height="357" viewBox="886 266 446 357">
    <defs>
      <linearGradient id="c1" x1="0" y1="0" x2="0" y2="1"><stop offset="0" stop-color="#a4e860"/><stop offset=".2" stop-color="#6ecb2a"/><stop offset="1" stop-color="#4bb106"/></linearGradient>
      <linearGradient id="c2" x1="0" y1="0" x2="0" y2="1"><stop offset="0" stop-color="#d3ff9c"/><stop offset=".5" stop-color="#a0ef4e"/><stop offset="1" stop-color="#7fd930"/></linearGradient>
      <linearGradient id="c3" x1="0" y1="0" x2="0" y2="1"><stop offset="0" stop-color="#eee"/><stop offset=".4" stop-color="#bab9c1"/><stop offset=".45" stop-color="#9d9ba9"/><stop offset="1" stop-color="#9392a1"/></linearGradient>
      <linearGradient id="c4" x1="0" y1="0" x2="0" y2="1"><stop offset="0" stop-color="#aaa"/><stop offset=".45" stop-color="#666"/><stop offset=".5" stop-color="#333"/><stop offset="1" stop-color="#484848"/></linearGradient>
      <radialGradient id="c5"><stop offset="0" stop-color="#eee"/><stop offset="1" stop-color="#bbb"/></radialGradient>
    </defs>
    <path d="M886 266h446v357H886z" fill="#d4d0c8"/>
    <path d="M983.500 266v357M1133.500 266v357M1283.500 266v357M886 296.500h446M886 346.500h446M886 396.500h446M886 446.500h446M886 496.500h446M886 546.500h446M886 596.500h446" stroke="#bab7b0"/>
    <rect x="1004.500" y="381.500" width="229" height="80" rx="20" fill="#b497ee" fill-opacity=".83" stroke="#a090bd"/>
    <path d="M1206 421.500q60 0 126 5.500M1206 421.500q70 0 126 11.500" fill="none" stroke="#76cc28" stroke-width="2.800"/>
    <path d="M1102 512.500q120 0 230-12M1102 550.500q120 0 230-11.500" fill="none" stroke="#5b5953" stroke-width="2.800"/>
    <circle cx="1204" cy="421.500" r="4" fill="#fff" stroke="#111" stroke-width="1.500"/><circle cx="1100" cy="512.500" r="4" fill="#fff" stroke="#111" stroke-width="1.500"/><circle cx="1099" cy="550.500" r="4" fill="#fff" stroke="#111" stroke-width="1.500"/>
    <rect x="1034.500" y="411.500" width="169" height="20" rx="2" fill="url(#c2)"/><path d="M1083 411.500h-46q-2.500 0-2.500 2.500v15q0 2.500 2.500 2.500h46z" fill="url(#c1)"/><rect x="1034.500" y="411.500" width="169" height="20" rx="2" fill="none" stroke="#162f08"/><path d="M1083.500 411v21" stroke="#162f08"/>
    <path d="M1093.500 416v5.500h30M1150 421.500h43.500V416M1103.500 418.500v3M1153.500 418.500v3M1163.500 418.500v3M1173.500 418.500v3M1183.500 418.500v3" fill="none" stroke="#6fbd31"/>
    <circle cx="1116.500" cy="421.500" r="3.200" fill="#fff" stroke="#000" stroke-width="1.800"/>
    <text x="1040" y="424" textLength="38">Folding</text><text x="1124" y="424" class="num">1.150</text>
    <rect x="996.500" y="501.500" width="103" height="22" rx="2.500" fill="url(#c3)" stroke="#222"/><rect x="1051.500" y="503.500" width="46" height="18" rx="1" fill="url(#c4)" stroke="#000" stroke-width="1.300"/>
    <rect x="994.500" y="539.500" width="104" height="22" rx="2.500" fill="url(#c3)" stroke="#222"/><rect x="1050.500" y="541.500" width="46" height="18" rx="1" fill="#404040" stroke="#000" stroke-width="1.300"/>
    <text x="1006" y="515" textLength="33">Button</text><text x="1003" y="553" textLength="36">Toggle</text><text x="1056.500" y="554" class="mono">True</text>
    <rect x="880.500" y="595.500" width="12" height="27" fill="url(#c4)" stroke="#000"/>
    <path d="M1283 568l6 3-1 5 5-4 5 1 5-3 5 4 8 0q9 8 8 22l-3 9h-26l-12-7-3-6 1-8 5-6z"/>
    <circle cx="1301.500" cy="593.500" r="19.500" fill="url(#c5)" stroke="#444" stroke-width="2"/><circle cx="1301.500" cy="593.500" r="18.500" fill="none" stroke="#fff" stroke-width="1.800"/><path d="M1288 582l6-5-1 6zM1310 577l7 6-6 2zM1287 602l5 3-4 3zM1316 603l-4 7-3-6z" fill="#fff"/>
  </svg>
  <footer class="ghstatus"><svg width="17" height="17" viewBox="0 0 17 17"><circle cx="8.500" cy="8.500" r="7.500" fill="#1b5fc9" stroke="#082a74"/><circle cx="8.500" cy="8.500" r="5" fill="#48c3f5"/><path d="M8.500 3v7M8.500 11.500V14" stroke="#fff" stroke-width="3.500"/><path d="M8.500 3.500V9M8.500 12v1.500" stroke="#062a73" stroke-width="1.500"/></svg><span>Solution aborted by user after ~0.0 seconds (170 seconds ago)</span><em>1.0.0007</em><svg class="size" width="11" height="11" viewBox="0 0 11 11"><path d="M8 0h2v2H8zM4 4h2v2H4zM8 4h2v2H8zM0 8h2v2H0zM4 8h2v2H4zM8 8h2v2H8z" fill="#aaa"/></svg></footer>
</section>
</body>
</html>
```
FILE: styles.css
```css
* { box-sizing: border-box; }
body { margin: 0; width: 1360px; height: 768px; overflow: hidden; position: relative; background: #eaebef; font: 11.500px/16px "Open Sans", "Noto Sans", sans-serif; color: #222; letter-spacing: -0.120px; white-space: nowrap; }
p { margin: 0; }
svg { flex: none; display: block; }
.defs { position: absolute; }
.rhino { height: 728px; display: flex; flex-direction: column; }
.rhino > * { flex: none; }
.titlebar { height: 24px; background: #fff; display: flex; align-items: center; padding-left: 2px; color: #999; }
.caption { margin-left: 5px; letter-spacing: 0; }
.winctl { margin-left: auto; margin-right: 18px; }
.menu { height: 17px; background: #fff; color: #6d6d6d; padding-left: 7px; display: grid; line-height: 17px; grid-template-columns: 55px 53px 39px 45px 66px 42px 47px 43px 68px 77px 85px 54px 79px 54px 99px 60px; }
.command { margin-top: 5px; height: 72px; display: flex; }
.grip { width: 7px; border-left: 3px solid #eaebef; background: linear-gradient(90deg, #c9cedb 1px, transparent 1px 2px, #c9cedb 2px 3px, transparent 3px); }
.cmdbox { flex: 1; background: #fff; color: #000; }
.history { height: 54px; overflow: hidden; border-bottom: 1px solid #bfc7da; padding-left: 1px; letter-spacing: -0.090px; }
.history p { height: 15px; line-height: 15px; }
.history p:first-child { margin-top: -7px; }
.history .path { letter-spacing: 0.027px; }
.prompt { height: 18px; line-height: 16px; font-weight: 700; padding-left: 1px; letter-spacing: -0.350px; }
.cmdscroll { background: #eaebef; }
.tooltabs { margin-top: 3px; border-top: 1px solid #cfd3de; height: 22px; display: grid; padding-left: 7px; grid-template-columns: 66px 74px 83px 90px 81px 147px 75px 84px 57px 78px 501px 20px; align-items: center; border-bottom: 1px solid #bfc7da; padding-top: 3px; color: #333; }
.tooltabs span { height: 17px; line-height: 17px; }
.tooltabs span:nth-child(2) { padding-left: 11px; }
.tooltabs .on { border: 1px solid #b9c4de; border-bottom: 0; border-radius: 7px 3px 0 0; padding-left: 10px; height: 17px; line-height: 15px; }
.tooltabs svg { color: #888; margin-top: -4px; }
.toolbar { height: 39px; padding: 1px 0 0 6px; display: flex; overflow: hidden; }
.toolbar svg { width: 28px; height: 28px; }
.work { height: 478px; display: flex; }
.side { width: 64px; flex: none; padding-top: 3px; }
.hgrip { display: block; margin-left: 3px; width: 55px; height: 3px; border: solid #c3cbdd; border-width: 1px 0; }
.tools { display: grid; grid-template-columns: 28px 28px; margin: 2px 0 0 1px; }
.tools svg { width: 28px; height: 28px; }
.more { font-size: 19px; line-height: 22px; padding-left: 14px; }
.view { width: 877px; flex: none; border: solid #bcc5dc; border-width: 1px; background: #9da4ab; position: relative; }
.viewlabel { position: absolute; left: 0; top: 0; width: 91px; height: 18px; background: #839af0; display: flex; align-items: center; padding-left: 7px; }
.viewlabel b { width: 73px; border-right: 1px solid #222; line-height: 14px; margin-top: -1px; letter-spacing: 0; }
.viewlabel i { margin-left: 2px; border: 4px solid transparent; border-top-color: #222; border-bottom: 0; }
.axis { font: 12px "Liberation Sans", sans-serif; fill: #5c5c5c; }
.panel { flex: 1; padding-left: 7px; display: flex; flex-direction: column; height: 497px; margin-bottom: -19px; }
.ptop { height: 11px; border-bottom: 1px solid #c6cddd; flex: none; }
.pgear { height: 29px; padding: 12px 0 0 396px; color: #bcc8e8; flex: none; }
.pbody { flex: 1; border: 1px solid #b9c4de; display: flex; flex-direction: column; padding-right: 3px; }
.pblank { height: 34px; border-bottom: 1px solid #b9c4de; }
.rows { flex: 1; background: #fff; overflow: hidden; }
.rows p { padding-left: 378px; height: 19px; line-height: 19px; border-bottom: 1px solid #e8e8ea; }
.rows p:first-child { height: 24px; line-height: 24px; padding-left: 382px; border: 0; }
.rows .b { font-weight: 700; letter-spacing: -0.500px; }
.rows .sel { background: #7d94e4; }
.hscroll { height: 17px; background: #f0f0f0; display: flex; }
.hscroll i { width: 334px; margin-right: 38px; height: 15px; background: #cdcdcd; }
.viewtabs { height: 25px; padding-left: 64px; display: grid; grid-template-columns: 84px 35px 43px 42px 20px; width: 320px; line-height: 22px; }
.viewtabs .on { height: 21px; width: 75px; border: 1px solid #b9c4de; border-top: 0; border-radius: 0 0 3px 8px; padding-left: 9px; }
.viewtabs svg { margin-top: 7px; }
.osnap { height: 23px; padding: 2px 0 0 9px; display: grid; grid-template-columns: 39px 53px 55px 47px 44px 37px 47px 42px 51px 53px 60px 73px 80px; align-items: center; width: 700px; }
.osnap label { display: flex; align-items: center; gap: 3px; }
.osnap i { width: 13px; height: 13px; border: 1px solid #333; background: #fff; display: flex; justify-content: center; }
.osnap .c i::after { content: ""; width: 4px; height: 8px; border: solid #222; border-width: 0 1px 1px 0; transform: rotate(40deg); }
.osnap .d { gap: 5px; }
.osnap .d i { width: 11px; height: 11px; border-color: #aaa; background: #ddd; }
.status { height: 20px; border-top: 1px solid #bfc7da; display: grid; grid-template-columns: 51px 88px 88px 88px 88px 168px 108px 38px 47px 50px 73px 59px 94px 44px 269px 7px; line-height: 19px; text-align: center; letter-spacing: -0.180px; }
.status span { border-right: 1px solid #bfc7da; }
.status .on { background: #cfd9f0; font-weight: 700; letter-spacing: -0.300px; }
.status .l { display: flex; align-items: center; padding-left: 1px; }
.status .l i { width: 14px; height: 14px; background: #000; margin: 0 2px; }
.status span:last-child { border: 0; }

.taskbar { height: 40px; display: flex; background: linear-gradient(90deg, #1b2640 0, #1b212d 22%, #1c2029 47%, #1c2839 57%, #1b2130 72%, #1b2028 85%, #16253c 94%, #101a2b); color: #fff; }
.sys { display: flex; width: 194px; }
.sys svg { width: 48px; height: 40px; }
.apps { display: flex; }
.apps span { width: 49px; height: 40px; position: relative; }
.apps svg { width: 48px; height: 40px; }
.apps .run::after { content: ""; position: absolute; left: 5px; bottom: 0; width: 40px; height: 2px; background: #76b9ed; }
.apps .two::after { background: linear-gradient(90deg, #76b9ed 31px, #4d7ca0 31px); }
.apps .active { background: #4b4b50; width: 48px; margin: 0 0 0 1px; }
.apps .active::after { left: 0; width: 48px; }
.apps em, .note em { position: absolute; font-style: normal; text-align: center; }
.apps em { left: 24px; top: 18px; width: 16px; height: 16px; border-radius: 8px; background: #f70b0b; font-size: 11px; line-height: 16px; }
.apps .soft { background: #f05254; width: 14px; height: 14px; line-height: 13px; left: 26px; top: 19px; font-size: 10px; }
.seven { font: 13px "Open Sans", sans-serif; fill: #fff; }
.tray { margin-left: auto; display: flex; align-items: center; }
.tray > svg { height: 40px; }
.eng { margin-left: 5px; width: 28px; font-size: 12px; letter-spacing: -0.400px; }
.clock { width: 75px; text-align: center; line-height: 18px; letter-spacing: -0.220px; }
.note { width: 24px; margin-left: 6px; margin-right: 15px; position: relative; }
.note em { left: 10px; top: 18px; width: 17px; height: 17px; border: 1px solid #777; border-radius: 9px; background: #2c3138; line-height: 15px; font-weight: 700; }
.peek { width: 5px; height: 40px; border-left: 1px solid #7a828c; }

.gh { position: absolute; left: 883px; top: 66px; width: 451px; height: 582px; border: 1px solid #666; background: #f0f0f0; color: #000; box-shadow: 0 5px 16px rgba(0,0,0,.45); display: flex; flex-direction: column; }
.ghtitle { height: 30px; background: #fff; display: flex; line-height: 29px; padding-left: 8px; justify-content: space-between; }
.ghtitle svg { margin-right: 8px; }
.ghmenu { height: 27px; line-height: 27px; background: linear-gradient(90deg, #f0f0f0, #fafafa); padding-left: 13px; display: grid; grid-template-columns: 37px 39px 44px 57px 63px 138px 60px; }
.ghtabs { height: 22px; line-height: 23px; color: #777; display: grid; grid-template-columns: 45px 41px 34px 35px 34px 31px 39px 31px 27px 28px 27px 30px 27px 16px; border-bottom: 1px solid #999; letter-spacing: -0.100px; }
.ghtabs .on { width: 38px; height: 22px; line-height: 18px; border: 1px solid #999; border-bottom: 0; background: linear-gradient(#fff 60%, #e8e8e8); border-radius: 6px 6px 0 0; padding-left: 7px; color: #000; }
.ribbon { height: 89px; display: flex; gap: 3px; padding: 3px 0 0 3px; background: linear-gradient(#cecece, #f0f0f0 60%); border-bottom: 1px solid #777; align-items: flex-start; }
.group { height: 73px; border: 1px solid #888; border-radius: 4px; background: linear-gradient(#e2e2e2, #f5f5f5); overflow: hidden; }
.geo { width: 127px; }
.pri { width: 61px; }
.inp { width: 99px; }
.uti { width: 109px; }
.keys { height: 58px; display: grid; grid-template-rows: 28px 28px; padding-left: 1px; }
.geo .keys { grid-template-columns: 28px 12px 28px 28px 28px; }
.pri .keys { grid-template-columns: 28px 28px; }
.inp .keys { grid-template-columns: 28px 10px 28px 28px; }
.uti .keys { grid-template-columns: 28px 10px 28px 10px 28px; }
.keys svg { width: 28px; height: 28px; }
.keys i { justify-self: center; width: 1px; background: #bbb; }
.cap { height: 14px; background: #1c1c1c; color: #fff; text-align: center; line-height: 12px; font-size: 10.500px; letter-spacing: -0.200px; display: flex; justify-content: center; position: relative; padding-right: 12px; }
.cap b { position: absolute; right: 2px; color: #999; font-size: 12px; }
.glyph { font: bold 17px "Liberation Serif", serif; fill: #fff; text-anchor: middle; }
.big { font-size: 19px; }
.cond { font-size: 16px; letter-spacing: -1px; }
.ghbar { height: 31px; margin: 0 2px; border-top: 1px solid #777; border-left: 1px solid #777; background: linear-gradient(#fff, #f3f3f3); display: flex; align-items: center; padding-left: 1px; }
.ghbar svg { height: 31px; }
.ghbar .sep { width: 1px; height: 21px; background: #c4c4c4; margin: 0 5px 0 7px; }
.combo { width: 136px; height: 23px; border: 1px solid #777; background: #fff; display: flex; align-items: center; justify-content: space-between; padding: 0 4px 0 3px; }
.combo span { margin-top: -2px; }
.combo svg { height: 6px; }
.m3 { margin-left: 3px; } .m5 { margin-left: 5px; } .m6 { margin-left: 6px; } .m7 { margin-left: 7px; } .m8 { margin-left: 8px; } .m14 { margin-left: 14px; }
.gem { margin-left: -2px; }
.dd { border: 3px solid transparent; border-top-color: #000; border-bottom: 0; }
.over { margin-left: auto; background: linear-gradient(#eee, #ccc); }
.canvas { margin: 0 2px; }
.canvas text { font: 11px "DejaVu Sans", "Open Sans", sans-serif; fill: #111; letter-spacing: 0; }
.canvas .num { font: 11.500px "Open Sans", sans-serif; letter-spacing: -0.600px; }
.canvas .mono { font: 13px "Liberation Mono", monospace; fill: #fff; stroke: #fff; stroke-width: .3px; letter-spacing: .5px; }
.ghstatus { flex: 1; border-top: 1px solid #fff; display: flex; align-items: center; padding-left: 4px; }
.ghstatus span { width: 353px; padding-left: 3px; }
.ghstatus em { font-style: normal; color: #888; letter-spacing: -0.200px; margin-left: 1px; }
.size { margin: 9px 0 0 17px; }
```
